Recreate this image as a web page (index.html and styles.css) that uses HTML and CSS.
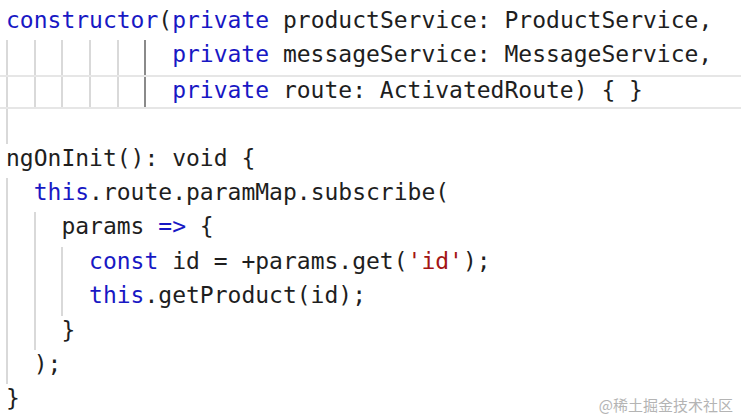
FILE: index.html
```html
<!DOCTYPE html>
<html>
<head>
<meta charset="utf-8">
<link rel="stylesheet" href="styles.css">
</head>
<body>
<div class="editor">
  <div class="line"><span class="code"><span class="kw">constructor</span>(<span class="kw">private</span> productService: ProductService,</span></div>
  <div class="line"><span class="ig"></span><span class="ig"></span><span class="ig"></span><span class="ig"></span><span class="ig"></span><span class="ig active"></span><span class="code"><span class="kw">private</span> messageService: MessageService,</span></div>
  <div class="line current"><span class="ig"></span><span class="ig"></span><span class="ig"></span><span class="ig"></span><span class="ig"></span><span class="ig active"></span><span class="code"><span class="kw">private</span> route: ActivatedRoute) { }</span></div>
  <div class="line"><span class="ig"></span></div>
  <div class="line"><span class="code">ngOnInit(): void {</span></div>
  <div class="line"><span class="ig"></span><span class="code"><span class="kw">this</span>.route.paramMap.subscribe(</span></div>
  <div class="line"><span class="ig"></span><span class="ig"></span><span class="code">params <span class="kw">=&gt;</span> {</span></div>
  <div class="line"><span class="ig"></span><span class="ig"></span><span class="ig"></span><span class="code"><span class="kw">const</span> id = +params.get(<span class="str">'id'</span>);</span></div>
  <div class="line"><span class="ig"></span><span class="ig"></span><span class="ig"></span><span class="code"><span class="kw">this</span>.getProduct(id);</span></div>
  <div class="line"><span class="ig"></span><span class="ig"></span><span class="code">}</span></div>
  <div class="line"><span class="ig"></span><span class="code">);</span></div>
  <div class="line"><span class="code">}</span></div>
</div>
<div class="watermark">@稀土掘金技术社区</div>
</body>
</html>
```

FILE: styles.css
```css
html, body {
  margin: 0;
  padding: 0;
  background: #ffffff;
  overflow: hidden;
  width: 741px;
  height: 419px;
}

.editor {
  padding-top: 6px;
  font-family: "DejaVu Sans Mono", "Liberation Mono", monospace;
  font-size: 23px;
  color: #1e1e1e;
}

.line {
  display: flex;
  height: 34.4px;
  padding-left: 6px;
  box-sizing: border-box;
  white-space: pre;
}

.line.current {
  border-top: 2px solid #e6e6e6;
  border-bottom: 2px solid #e6e6e6;
}

.ig {
  flex: none;
  width: 2ch;
  box-sizing: border-box;
  border-left: 2px solid #d9d9d9;
}

.ig.active {
  border-left-color: #8a8a8a;
}

.code {
  line-height: 27px;
  padding-top: 1px;
  align-self: flex-start;
}

.current .code {
  padding-top: 0;
}

.kw {
  color: #1818c4;
}

.str {
  color: #a31515;
}

.watermark {
  position: absolute;
  right: 8px;
  bottom: 4px;
  font-family: "Noto Sans CJK SC", sans-serif;
  font-size: 15px;
  line-height: 20px;
  color: #b4b4b4;
}
```
